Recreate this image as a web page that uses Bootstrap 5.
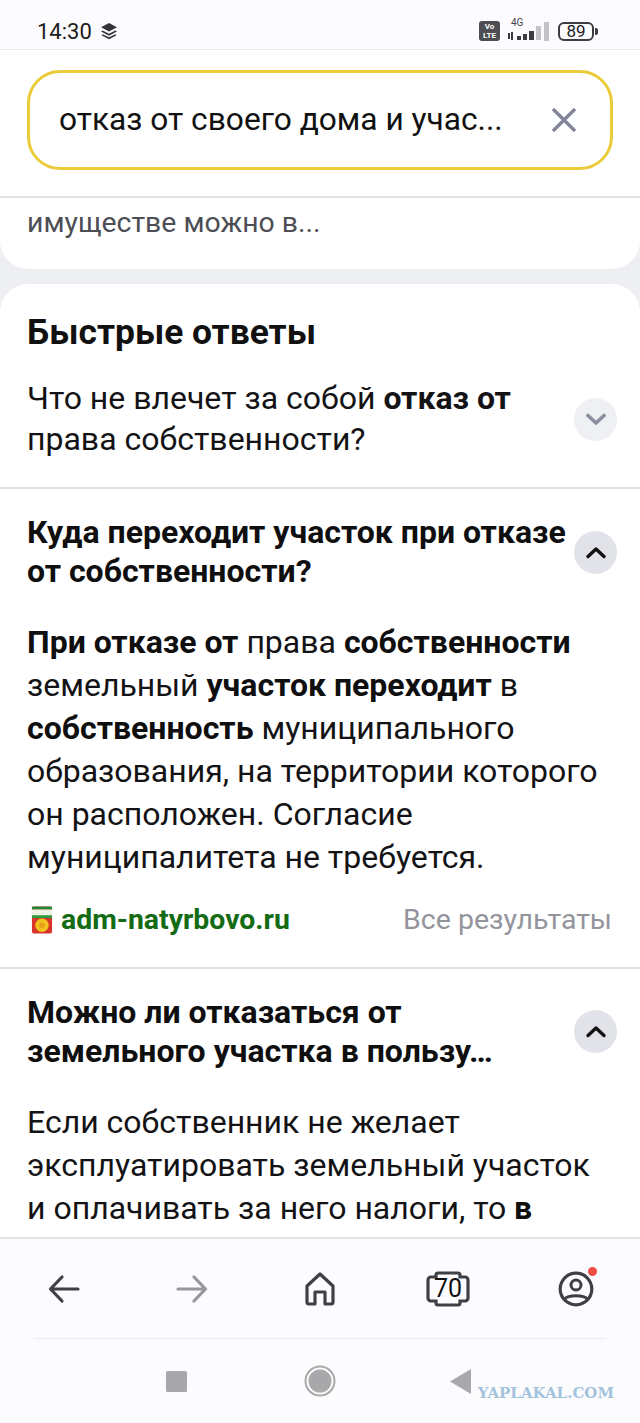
<!DOCTYPE html>
<html lang="ru">
  <head>
    <meta charset="UTF-8" />
    <meta name="viewport" content="width=device-width, initial-scale=1.0" />
    <title>Поиск</title>
    <link href="https://cdn.jsdelivr.net/npm/bootstrap@5.3.0/dist/css/bootstrap.min.css" rel="stylesheet" />
    <style>
      html, body { height: 1423px; overflow: hidden; }
      body { font-family: Roboto, "Liberation Sans", sans-serif; background: #eeeff2; color: #131315; }
      .phone-screen { width: 640px; height: 1423px; }
      .status-row { height: 50px; background: #fcfbfe; padding: 13px 42px 0 37px; border-bottom: 1px solid #ececef; font-size: 22px; color: #1c1c20; }
      .search-wrap { height: 148px; background: #fff; padding: 20px 27px 0; border-bottom: 2px solid #e4e4e7; }
      .search-field { height: 100px; border: 3px solid #eccb3a; border-radius: 33px; padding: 0 33px 0 29px; font-size: 31.7px; color: #111; }
      .snippet-end { height: 71px; background: #fff; border-radius: 0 0 28px 28px; padding: 6px 27px 0; font-size: 28.4px; line-height: 38px; color: #4d4d55; }
      .answers-card { background: #fff; border-radius: 28px 28px 0 0; margin-top: 15px; padding-bottom: 80px; }
      .answers-title { font-size: 35.4px; font-weight: 700; line-height: 40px; padding: 28px 27px 0; color: #111; }
      .qa-row { padding: 0 23px 0 27px; }
      .qa-first { padding-top: 26px; }
      .qa-text { font-size: 32px; line-height: 41px; }
      .qa-head { font-size: 32px; font-weight: 700; line-height: 39px; color: #0f0f10; }
      .qa-body { font-size: 32px; line-height: 43px; padding: 6px 27px 0; }
      .qa-body b { color: #0f0f10; }
      .round-toggle { width: 43px; height: 43px; border-radius: 50%; flex-shrink: 0; }
      .toggle-closed { background: #eff0f3; }
      .toggle-open { background: #e2e3e8; }
      .qa-sep { border-top: 2px solid #e3e3e6; margin-top: 27px; }
      .source-row { padding: 0 28px 0 31px; margin-top: 20px; }
      .source-row + .qa-sep { margin-top: 25px; }
      .source-name { font-size: 28.4px; font-weight: 700; color: #136b14; }
      .all-results { font-size: 28.5px; color: #93949c; }
      .main-area { min-height: 0; overflow: hidden; }
      .bottom-tabs { height: 186px; background: #fcfcfe; border-top: 2px solid #e2e2e5; }
      .tab-row { height: 99px; }
      .tab-slot { width: 128px; }
      .tab-line { height: 1px; background: #ececef; margin: 0 34px; }
      .sys-row { height: 84px; gap: 117px; padding-right: 4px; }
      .sys-back { margin-left: -3px; }
      .tab-count { font-size: 25px; line-height: 1; color: #111; }
      .red-dot { width: 9px; height: 9px; background: #ee4d45; top: -4px; right: -3px; }
      .wm-text { font-family: "DejaVu Serif", "Liberation Serif", serif; font-weight: 700; font-size: 15px; color: #a3c3dc; right: 26px; bottom: 19px; }
      .batt-box { width: 36px; height: 19px; border: 2px solid #3c3c42; border-radius: 6px; font-size: 17px; line-height: 1; }
      .batt-cap { width: 3px; height: 7px; background: #3c3c42; border-radius: 0 2px 2px 0; margin-left: 1px; }
      .volte-box { width: 21px; height: 20px; background: #4d4d52; border-radius: 3px; color: #fff; font-size: 8px; font-weight: 700; line-height: 9px; }
      .net-label { font-size: 10px; line-height: 1; color: #44444a; left: 3px; top: -3px; }
      .signal-box { width: 42px; height: 21px; }
    </style>
  </head>
  <body>
    <div class="phone-screen d-flex flex-column position-relative">
      <div class="status-row d-flex align-items-center justify-content-between flex-shrink-0">
        <div class="d-flex align-items-center gap-2">
          <span>14:30</span>
          <svg width="18" height="18" viewBox="0 0 17 17"><path d="M8.5 1 16 5 8.5 9 1 5z" fill="#333338"/><path d="M2.5 8 8.5 11.2 14.5 8 16 9 8.5 13 1 9z" fill="#333338"/><path d="M2.5 11.6 8.5 14.4 14.5 11.6 15.6 12.6 8.5 16.4 1.4 12.6z" fill="#333338"/></svg>
        </div>
        <div class="d-flex align-items-center gap-2">
          <div class="volte-box d-flex flex-column align-items-center justify-content-center"><span>Vo</span><span>LTE</span></div>
          <div class="signal-box position-relative">
            <span class="net-label position-absolute">4G</span>
            <svg class="d-block" width="42" height="21" viewBox="0 0 42 21"><g fill="#3c3c42"><rect x="0" y="12" width="2" height="6"/><rect x="3" y="11" width="2" height="8"/><rect x="9" y="15" width="4" height="4"/><rect x="15" y="13" width="4" height="6"/><rect x="21" y="10" width="5" height="9"/></g><g fill="#c3c3c8"><rect x="28" y="5" width="5" height="14"/><rect x="36" y="1" width="5" height="19"/></g></svg>
          </div>
          <div class="d-flex align-items-center">
            <div class="batt-box d-flex align-items-center justify-content-center">89</div>
            <div class="batt-cap"></div>
          </div>
        </div>
      </div>

      <div class="search-wrap flex-shrink-0">
        <div class="search-field d-flex align-items-center justify-content-between">
          <span>отказ от своего дома и учас...</span>
          <svg width="26" height="26" viewBox="0 0 26 26"><path d="M2 2 24 24M24 2 2 24" stroke="#83869a" stroke-width="3.4" fill="none"/></svg>
        </div>
      </div>

      <div class="main-area flex-grow-1">
        <div class="snippet-end">имуществе можно в...</div>
        <div class="answers-card">
          <div class="answers-title">Быстрые ответы</div>
          <div class="qa-row qa-first d-flex justify-content-between align-items-center">
            <div class="qa-text">Что не влечет за собой <b>отказ от</b><br />права собственности?</div>
            <div class="round-toggle toggle-closed d-flex align-items-center justify-content-center">
              <svg width="22" height="13" viewBox="0 0 22 13"><path d="M3 2.5 11 10 19 2.5" stroke="#8b8e9e" stroke-width="3.6" fill="none" stroke-linecap="round" stroke-linejoin="round"/></svg>
            </div>
          </div>
          <div class="qa-sep"></div>
          <div class="qa-row d-flex justify-content-between align-items-center pt-4">
            <div class="qa-head">Куда переходит участок при отказе<br />от собственности?</div>
            <div class="round-toggle toggle-open d-flex align-items-center justify-content-center">
              <svg width="22" height="13" viewBox="0 0 22 13"><path d="M3 10.5 11 3 19 10.5" stroke="#111" stroke-width="3.4" fill="none" stroke-linecap="round" stroke-linejoin="round"/></svg>
            </div>
          </div>
          <div class="qa-body mt-4">
            <b>При отказе от</b> права <b>собственности</b><br />земельный <b>участок переходит</b> в<br /><b>собственность</b> муниципального<br />образования, на территории которого<br />он расположен. Согласие<br />муниципалитета не требуется.
          </div>
          <div class="d-flex justify-content-between align-items-center source-row">
            <div class="d-flex align-items-center gap-2">
              <svg width="22" height="30" viewBox="0 0 23 30"><rect x="1" y="1" width="21" height="28" rx="2" fill="#d8352b"/><rect x="1" y="1" width="21" height="3" fill="#1f8a35"/><rect x="1" y="4" width="21" height="8" fill="#eef3e6"/><path d="M1 10h21v3H1z" fill="#2f9a40"/><circle cx="11.5" cy="20.500" r="7" fill="#f2c21d"/><circle cx="11.5" cy="20.500" r="3" fill="#e8a01a"/></svg>
              <span class="source-name">adm-natyrbovo.ru</span>
            </div>
            <span class="all-results">Все результаты</span>
          </div>
          <div class="qa-sep"></div>
          <div class="qa-row d-flex justify-content-between align-items-center pt-4">
            <div class="qa-head">Можно ли отказаться от<br />земельного участка в пользу…</div>
            <div class="round-toggle toggle-open d-flex align-items-center justify-content-center">
              <svg width="22" height="13" viewBox="0 0 22 13"><path d="M3 10.5 11 3 19 10.5" stroke="#111" stroke-width="3.4" fill="none" stroke-linecap="round" stroke-linejoin="round"/></svg>
            </div>
          </div>
          <div class="qa-body mt-4">
            Если собственник не желает<br />эксплуатировать земельный участок<br />и оплачивать за него налоги, то <b>в</b>
          </div>
        </div>
      </div>

      <div class="bottom-tabs flex-shrink-0">
        <div class="tab-row d-flex align-items-center">
          <div class="tab-slot d-flex justify-content-center">
            <svg width="32" height="30" viewBox="0 0 32 30"><path d="M30 15H3M14 3 2.500 15 14 27" stroke="#3f3f46" stroke-width="3.200" fill="none" stroke-linecap="round" stroke-linejoin="round"/></svg>
          </div>
          <div class="tab-slot d-flex justify-content-center">
            <svg width="32" height="30" viewBox="0 0 32 30"><path d="M2 15H29M18 3 29.500 15 18 27" stroke="#96969c" stroke-width="3.200" fill="none" stroke-linecap="round" stroke-linejoin="round"/></svg>
          </div>
          <div class="tab-slot d-flex justify-content-center">
            <svg width="32" height="34" viewBox="0 0 32 34"><path d="M3 14 16 2 29 14V30a2 2 0 0 1-2 2H21V20H11V32H5a2 2 0 0 1-2-2Z" stroke="#3f3f46" stroke-width="3.200" fill="none" stroke-linejoin="round"/></svg>
          </div>
          <div class="tab-slot d-flex justify-content-center">
            <div class="position-relative d-flex align-items-center justify-content-center">
              <svg width="44" height="36" viewBox="0 0 44 36"><path d="M10 6V4a2 2 0 0 1 2-2H32a2 2 0 0 1 2 2V6h5a3 3 0 0 1 3 3V27a3 3 0 0 1-3 3H34v2a2 2 0 0 1-2 2H12a2 2 0 0 1-2-2V30H5a3 3 0 0 1-3-3V9a3 3 0 0 1 3-3Z" stroke="#3f3f46" stroke-width="3.200" fill="none"/></svg>
              <span class="tab-count position-absolute">70</span>
            </div>
          </div>
          <div class="tab-slot d-flex justify-content-center">
            <div class="position-relative">
              <svg class="d-block" width="36" height="36" viewBox="0 0 36 36"><circle cx="18" cy="18" r="15.800" stroke="#3f3f46" stroke-width="3.200" fill="none"/><circle cx="18" cy="14" r="5" stroke="#3f3f46" stroke-width="3" fill="none"/><path d="M6.500 28C10 23.500 26 23.500 29.500 28" stroke="#3f3f46" stroke-width="3" fill="none"/></svg>
              <span class="red-dot position-absolute rounded-circle"></span>
            </div>
          </div>
        </div>
        <div class="tab-line"></div>
        <div class="sys-row d-flex align-items-center justify-content-center">
          <svg width="21" height="21" viewBox="0 0 21 21"><rect width="21" height="21" rx="1.500" fill="#a8a8aa"/></svg>
          <svg width="32" height="32" viewBox="0 0 32 32"><circle cx="16" cy="16" r="14.500" fill="none" stroke="#a8a8aa" stroke-width="2"/><circle cx="16" cy="16" r="11.500" fill="#a8a8aa"/></svg>
          <svg class="sys-back" width="21" height="25" viewBox="0 0 21 25"><path d="M21 0V25L0 12.500Z" fill="#a8a8aa"/></svg>
        </div>
      </div>
      <span class="wm-text position-absolute">YAPLAKAL.COM</span>
    </div>
    <script src="https://cdn.jsdelivr.net/npm/bootstrap@5.3.0/dist/js/bootstrap.bundle.min.js"></script>
  </body>
</html>
